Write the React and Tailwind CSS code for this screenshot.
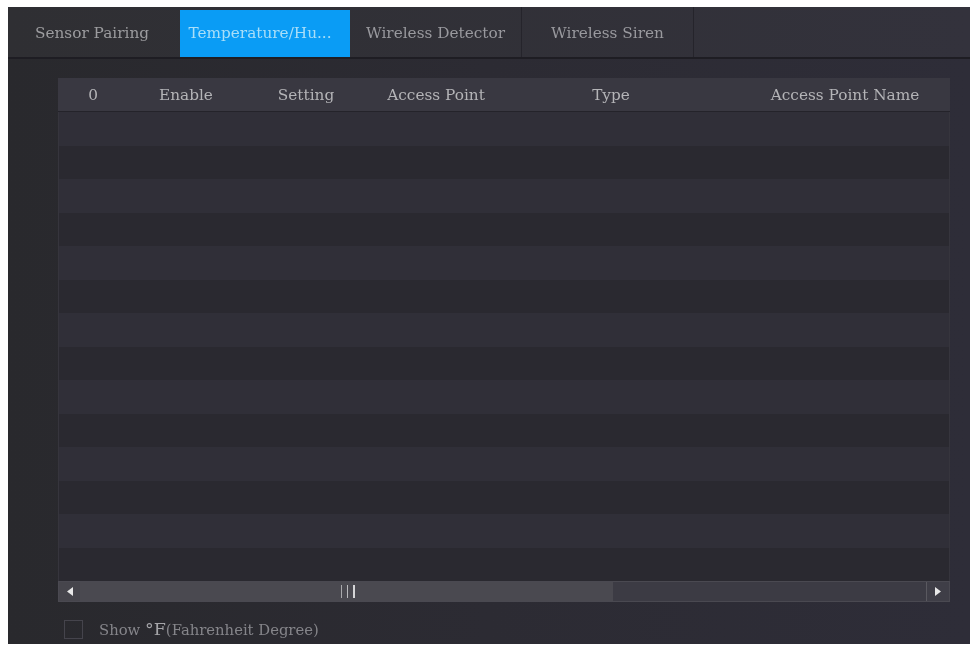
// App.jsx
const tabs = [
  { label: "Sensor Pairing", cls: "w-[172px] pr-[4px] pt-[3px] text-[#9c9c9f]" },
  { label: "Temperature/Hu...", cls: "w-[170px] pr-[10px] text-[#a9def8] bg-[#0a9cf5] mt-[3px]" },
  { label: "Wireless Detector", cls: "w-[172px] pt-[3px] text-[#99999e] border-r border-[#25242b]" },
  { label: "Wireless Siren", cls: "w-[172px] pt-[3px] text-[#99999e] border-r border-[#25242b]" },
];
const rows = Array.from({ length: 14 });

const App = () => {
  return (
    <div className="h-[648px] w-[973px] bg-white pt-[7px] pl-[8px] font-['DejaVu_Serif',serif]">
      <div className="flex h-[637px] w-[962px] flex-col bg-gradient-to-r from-[#29292d] via-[#2c2b33] to-[#2e2d38]">
        {/* Tabs */}
        <div className="flex h-[52px] shrink-0 border-b-2 border-[#1e1d23] bg-gradient-to-r from-[#2f2f33] to-[#33323c] text-[15.300px]">
          {tabs.map((tab) => (
            <div key={tab.label} className={`flex items-center justify-center whitespace-nowrap ${tab.cls}`}>
              <span className="blur-[0.4px]">{tab.label}</span>
            </div>
          ))}
        </div>

        {/* Table */}
        <div className="mt-[19px] ml-[50px] w-[892px]">
          <div className="grid h-[34px] grid-cols-[70px_116px_124px_136px_214px_232px] items-center border-b border-[#24232a] bg-[#393841] pt-[2px] text-[15.300px] text-[#b4b4b7]">
            <div className="text-center blur-[0.4px]">0</div>
            <div className="text-center blur-[0.4px]">Enable</div>
            <div className="text-center blur-[0.4px]">Setting</div>
            <div className="text-center blur-[0.4px]">Access Point</div>
            <div className="text-center blur-[0.4px]">Type</div>
            <div className="pl-[22px] text-center whitespace-nowrap blur-[0.4px]">Access Point Name</div>
          </div>
          <div className="border-x border-[#36353d]">
            {rows.map((_, i) => (
              <div key={i} className={i % 2 === 0 ? "h-[33.5px] bg-[#302f38]" : "h-[33.5px] bg-[#2a2930]"} />
            ))}
          </div>
          {/* Scrollbar */}
          <div className="flex h-[21px] items-stretch border border-[#4a4951] bg-[#3c3b44]">
            <div className="flex w-[21px] items-center justify-center bg-[#46454c]">
              <svg width="6" height="9" viewBox="0 0 6 9"><path d="M6 0v9L0 4.500z" fill="#e8e8e8" /></svg>
            </div>
            <div className="flex w-[533px] items-center justify-center bg-[#4a4950] pl-[2px]">
              <div className="flex gap-[5px]">
                <span className="h-[13px] w-px bg-[#a9a9ac]" />
                <span className="h-[13px] w-px bg-[#b9b9bc]" />
                <span className="h-[13px] w-[2px] bg-[#d5d5d7]" />
              </div>
            </div>
            <div className="flex-1" />
            <div className="flex w-[23px] items-center justify-center border-l border-[#5a5960] bg-[#3f3e47]">
              <svg width="6" height="9" viewBox="0 0 6 9"><path d="M0 0v9l6-4.500z" fill="#e8e8e8" /></svg>
            </div>
          </div>
        </div>

        {/* Fahrenheit option */}
        <div className="mt-[14px] ml-[56px] flex items-center gap-[16px] text-[14.800px] text-[#85858a]">
          <div className="h-[19px] w-[19px] border border-[#45444c]" />
          <span className="whitespace-nowrap blur-[0.4px]">
            Show <span className="text-[17.500px] text-[#a5a5a9]">°F</span>(Fahrenheit Degree)
          </span>
        </div>
      </div>
    </div>
  );
};

export default App;
